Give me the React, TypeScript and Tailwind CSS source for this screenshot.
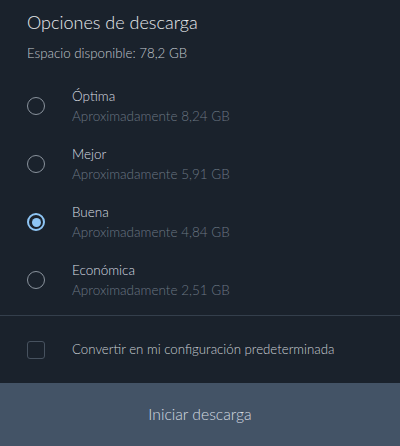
import React from "react";

const options = [
  { label: "Óptima", size: "Aproximadamente 8,24 GB", selected: false },
  { label: "Mejor", size: "Aproximadamente 5,91 GB", selected: false },
  { label: "Buena", size: "Aproximadamente 4,84 GB", selected: true },
  { label: "Económica", size: "Aproximadamente 2,51 GB", selected: false },
];

function Radio({ selected }: { selected: boolean }) {
  if (selected) {
    return (
      <div className="w-[18px] h-[18px] rounded-full border-[2px] border-[#8ec5f4] flex items-center justify-center">
        <div className="w-[9px] h-[9px] rounded-full bg-[#8ec5f4]" />
      </div>
    );
  }
  return <div className="w-[18px] h-[18px] rounded-full border-[1.5px] border-[#8a939d]" />;
}

export default function App() {
  return (
    <div
      className="w-[400px] h-[446px] bg-[#1a222c] flex flex-col overflow-hidden font-light"
      style={{ fontFamily: "Lato, 'Noto Sans', sans-serif" }}
    >
      <div className="px-[27px] pt-[9px]">
        <div className="text-[18px] leading-[26px] text-[#e6e9ec]">Opciones de descarga</div>
        <div className="mt-[9px] text-[13.3px] leading-[18px] text-[#c2c8ce]">Espacio disponible: 78,2 GB</div>
      </div>
      <div className="mt-[25px] flex flex-col gap-[20px]">
        {options.map((o) => (
          <div key={o.label} className="flex items-center pl-[27px]">
            <div className="w-[45px] flex">
              <Radio selected={o.selected} />
            </div>
            <div className="flex flex-col">
              <div className="text-[13.5px] leading-[18px] text-[#d9dde1]">{o.label}</div>
              <div className="mt-[2px] text-[13.5px] leading-[18px] text-[#6b7683]">{o.size}</div>
            </div>
          </div>
        ))}
      </div>
      <div className="mt-[16px] h-px bg-[#343f4c]" />
      <div className="flex items-center pl-[27px] h-[67px]">
        <div className="w-[45px] flex">
          <div className="w-[18px] h-[18px] rounded-[3px] border-[1.5px] border-[#47525f]" />
        </div>
        <div className="text-[13.25px] text-[#c9ced3]">Convertir en mi configuración predeterminada</div>
      </div>
      <div className="flex-1 bg-[#435366] flex items-center justify-center">
        <span className="text-[15.7px] text-[#d4dae0]">Iniciar descarga</span>
      </div>
    </div>
  );
}
